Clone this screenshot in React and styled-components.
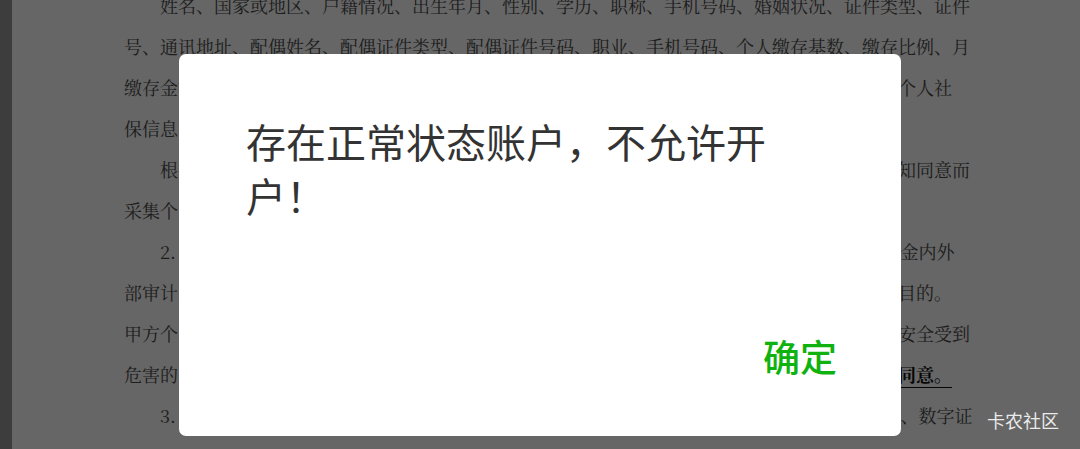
import styled, { createGlobalStyle } from "styled-components"

const GlobalStyle = createGlobalStyle`
  html, body {
    margin: 0;
    padding: 0;
    background: #666;
    overflow: hidden;
  }
`

const lines = [
  { text: "姓名、国家或地区、户籍情况、出生年月、性别、学历、职称、手机号码、婚姻状况、证件类型、证件", indent: true, cols: 47 },
  { text: "号、通讯地址、配偶姓名、配偶证件类型、配偶证件号码、职业、手机号码、个人缴存基数、缴存比例、月", cols: 47 },
  { text: "缴存金额、贷款信息、提取信息、还款信息等个人信息，以及甲方在其他政府部门或机构所留存的个人社", cols: 46 },
  { text: "保信息、纳税信息、不动产登记信息等。", short: true },
  { text: "根据国家相关法律法规及监管部门要求，乙方在办理业务过程中需经由甲方充分知悉并明确告知同意而", indent: true, cols: 47 },
  { text: "采集个人信息，甲方同意乙方依法采集上述信息。", short: true },
  { text: "2. 甲方同意乙方将上述个人信息用于办理住房公积金缴存、提取、贷款等业务及开展住房公积金内外", indent: true, cols: 46 },
  { text: "部审计、统计分析、监督检查、信息核验等与住房公积金管理相关的合法用途，不得用于任何其他目的。", cols: 46 },
  { text: "甲方个人信息将依法严格保密，但在甲方或者他人生命、健康、财产、名誉、隐私等重大合法权益安全受到", cols: 47 },
  { text: "危害的紧急情形下，乙方可依法依规合理处理、使用甲方的个人信息，", strong: "此情形下无需另行取得甲方同意。", cols: 46 },
  { text: "3. 甲方同意乙方在办理住房公积金相关业务时，可以依法使用甲方的个人电子签名、电子印章、数字证", indent: true, cols: 47 },
]

export default function App() {
  return (
    <>
      <GlobalStyle />
      <Screen>
        <SideStrip />
        <Page>
          <DocBody>
            {lines.map((l, i) => (
              <DocLine key={i} $indent={l.indent} $cols={l.cols} $short={l.short}>
                {l.text}
                {l.strong && <Marked>{l.strong}</Marked>}
              </DocLine>
            ))}
          </DocBody>
        </Page>
        <Mask>
          <Dialog>
            <Message>存在正常状态账户，不允许开户！</Message>
            <Footer>
              <ConfirmButton>确定</ConfirmButton>
            </Footer>
          </Dialog>
        </Mask>
        <Watermark>卡农社区</Watermark>
      </Screen>
    </>
  )
}

const Screen = styled.div`
  position: relative;
  display: flex;
  width: 1080px;
  height: 449px;
  overflow: hidden;
  background: #fff;
`

const SideStrip = styled.div`
  width: 12px;
  flex-shrink: 0;
  background: #9a9a9a;
`

const Page = styled.div`
  flex: 1;
  background: #fff;
  padding-left: 112px;
`

const DocBody = styled.div`
  margin-top: -15px;
  font-family: "Noto Serif CJK SC", "Noto Sans CJK SC", serif;
  font-size: 18px;
  line-height: 41px;
  color: #4a4a4a;
`

const DocLine = styled.div`
  box-sizing: border-box;
  white-space: nowrap;
  padding-left: ${(p) => (p.$indent ? "36px" : "0")};
  width: ${(p) => (p.$cols ? p.$cols * 18 + "px" : "auto")};
  text-align: ${(p) => (p.$short ? "left" : "justify")};
  text-align-last: ${(p) => (p.$short ? "left" : "justify")};
`

const Marked = styled.span`
  font-weight: 700;
  text-decoration: underline;
  text-underline-offset: 5px;
  color: #111;
`

const Mask = styled.div`
  position: absolute;
  inset: 0;
  background: rgba(0, 0, 0, 0.6);
  display: flex;
  justify-content: center;
  align-items: flex-start;
  padding-top: 54px;
`

const Dialog = styled.div`
  box-sizing: border-box;
  width: 722px;
  height: 382px;
  background: #fff;
  border-radius: 7px;
  display: flex;
  flex-direction: column;
  padding: 60px 64px 61px 67px;
  font-family: "Noto Sans CJK SC", "Noto Sans", sans-serif;
`

const Message = styled.div`
  max-width: 540px;
  font-size: 40px;
  line-height: 54px;
  color: #333;
`

const Footer = styled.div`
  margin-top: auto;
  display: flex;
  justify-content: flex-end;
`

const ConfirmButton = styled.button`
  border: none;
  background: none;
  padding: 0;
  font-family: inherit;
  font-size: 37px;
  line-height: 38px;
  font-weight: 500;
  color: #0fb20f;
  cursor: pointer;
`

const Watermark = styled.div`
  position: absolute;
  right: 21px;
  bottom: 20px;
  font-family: "Noto Sans CJK SC", sans-serif;
  font-size: 18px;
  line-height: 18px;
  color: rgba(255, 255, 255, 0.88);
`
